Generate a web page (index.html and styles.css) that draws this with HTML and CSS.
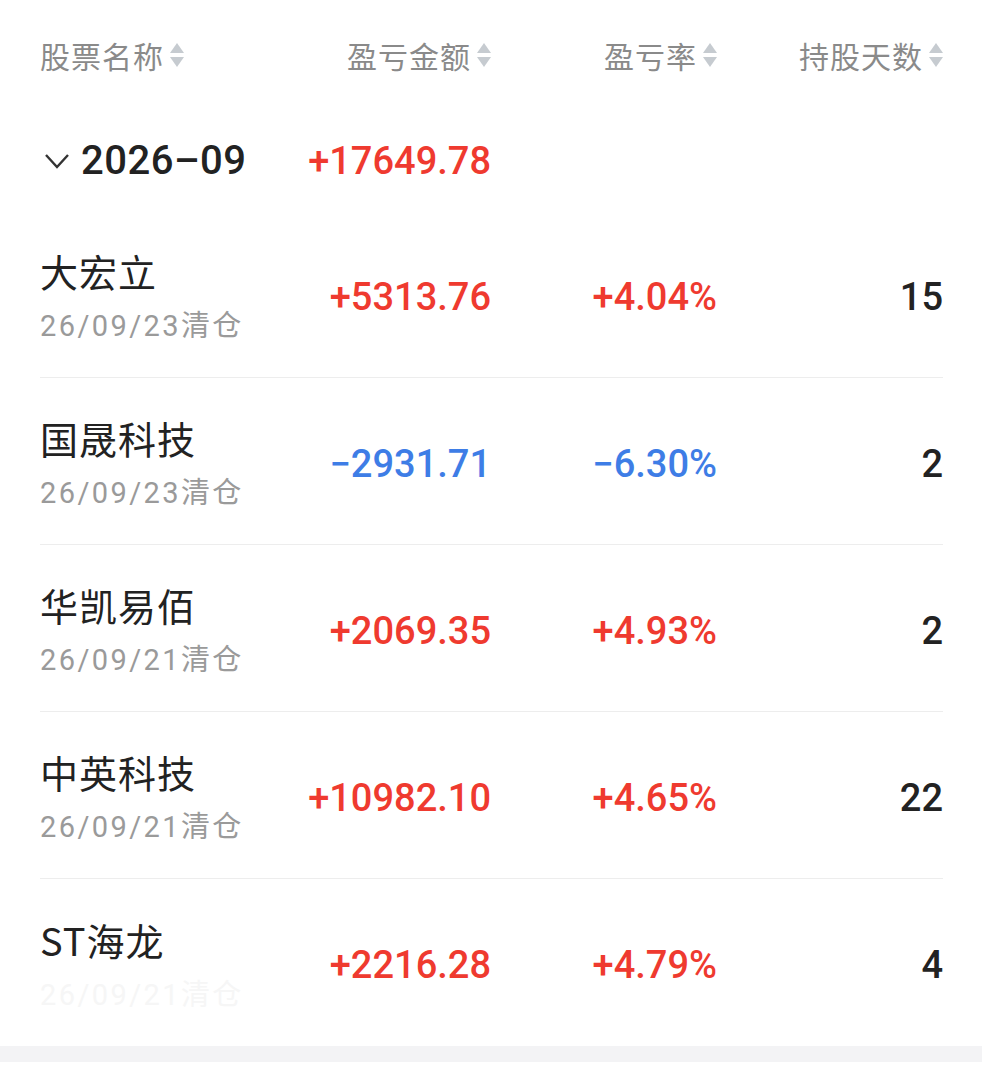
FILE: index.html
```html
<!DOCTYPE html>
<html lang="zh-CN">
<head>
    <meta charset="utf-8">
    <title>清仓记录</title>
    <link rel="stylesheet" href="styles.css">
</head>
<body>
<div class="list">
    <div class="head row-grid">
        <div class="th th-left">股票名称<span class="sort"><i class="up"></i><i class="down"></i></span></div>
        <div class="th">盈亏金额<span class="sort"><i class="up"></i><i class="down"></i></span></div>
        <div class="th">盈亏率<span class="sort"><i class="up"></i><i class="down"></i></span></div>
        <div class="th">持股天数<span class="sort"><i class="up"></i><i class="down"></i></span></div>
    </div>

    <div class="group row-grid">
        <div class="group-name">
            <svg class="chevron" width="28" height="18" viewBox="0 0 28 18">
                <polyline points="3,3 14,15 25,3" fill="none" stroke="#333" stroke-width="2.4"/>
            </svg>
            2026–09
        </div>
        <div class="num up-color">+17649.78</div>
        <div></div>
        <div></div>
    </div>

    <div class="item row-grid">
        <div class="name">
            <div class="stock">大宏立</div>
            <div class="date">26/09/23清仓</div>
        </div>
        <div class="num up-color">+5313.76</div>
        <div class="num up-color">+4.04%</div>
        <div class="num days">15</div>
    </div>

    <div class="item row-grid">
        <div class="name">
            <div class="stock">国晟科技</div>
            <div class="date">26/09/23清仓</div>
        </div>
        <div class="num down-color">−2931.71</div>
        <div class="num down-color">−6.30%</div>
        <div class="num days">2</div>
    </div>

    <div class="item row-grid">
        <div class="name">
            <div class="stock">华凯易佰</div>
            <div class="date">26/09/21清仓</div>
        </div>
        <div class="num up-color">+2069.35</div>
        <div class="num up-color">+4.93%</div>
        <div class="num days">2</div>
    </div>

    <div class="item row-grid">
        <div class="name">
            <div class="stock">中英科技</div>
            <div class="date">26/09/21清仓</div>
        </div>
        <div class="num up-color">+10982.10</div>
        <div class="num up-color">+4.65%</div>
        <div class="num days">22</div>
    </div>

    <div class="item row-grid last">
        <div class="name">
            <div class="stock">ST海龙</div>
            <div class="date faded">26/09/21清仓</div>
        </div>
        <div class="num up-color">+2216.28</div>
        <div class="num up-color">+4.79%</div>
        <div class="num days">4</div>
    </div>
</div>
<div class="band"></div>
</body>
</html>
```

FILE: styles.css
```css
body {
    margin: 0;
    background: #fff;
    font-family: Roboto, "Noto Sans CJK SC", sans-serif;
    color: #222;
}

.list {
    padding: 0 39px 0 40px;
}

.row-grid {
    display: grid;
    grid-template-columns: 240px 211px 226px 226px;
    align-items: center;
}

/* header */
.head {
    height: 110px;
}

.th {
    display: flex;
    align-items: center;
    justify-content: flex-end;
    font-family: "Noto Sans CJK SC", sans-serif;
    font-size: 30px;
    letter-spacing: 1px;
    color: #8a8a8a;
}

.th-left {
    justify-content: flex-start;
}

.sort {
    display: flex;
    flex-direction: column;
    gap: 4px;
    margin-left: 6px;
}

.sort i {
    display: block;
    width: 0;
    height: 0;
    border-left: 7px solid transparent;
    border-right: 7px solid transparent;
}

.sort .up {
    border-bottom: 10px solid #c6cbd0;
}

.sort .down {
    border-top: 10px solid #c6cbd0;
}

/* month group */
.group {
    height: 101px;
}

.group-name {
    display: flex;
    align-items: center;
    gap: 10px;
    font-size: 40px;
    font-weight: 500;
    letter-spacing: 0.5px;
    color: #222;
}

.chevron {
    margin-left: 3px;
}

/* rows */
.item {
    height: 167px;
    box-sizing: border-box;
    padding-top: 5px;
    border-bottom: 1px solid #ededed;
}

.item.last {
    border-bottom: none;
}

.name {
    display: flex;
    flex-direction: column;
}

.stock {
    font-family: "Noto Sans CJK SC", sans-serif;
    font-size: 38px;
    line-height: 48px;
    letter-spacing: 1px;
    color: #222;
}

.date {
    margin-top: 11px;
    font-size: 29px;
    line-height: 40px;
    letter-spacing: 2.4px;
    color: #9a9a9a;
    white-space: nowrap;
}

.date.faded {
    color: #f6f6f6;
}

.num {
    text-align: right;
    font-size: 38px;
    font-weight: 500;
}

.up-color {
    color: #ef3a2f;
}

.down-color {
    color: #3e7de6;
}

.days {
    color: #222;
}

.band {
    height: 16px;
    background: #f3f3f5;
}
```
